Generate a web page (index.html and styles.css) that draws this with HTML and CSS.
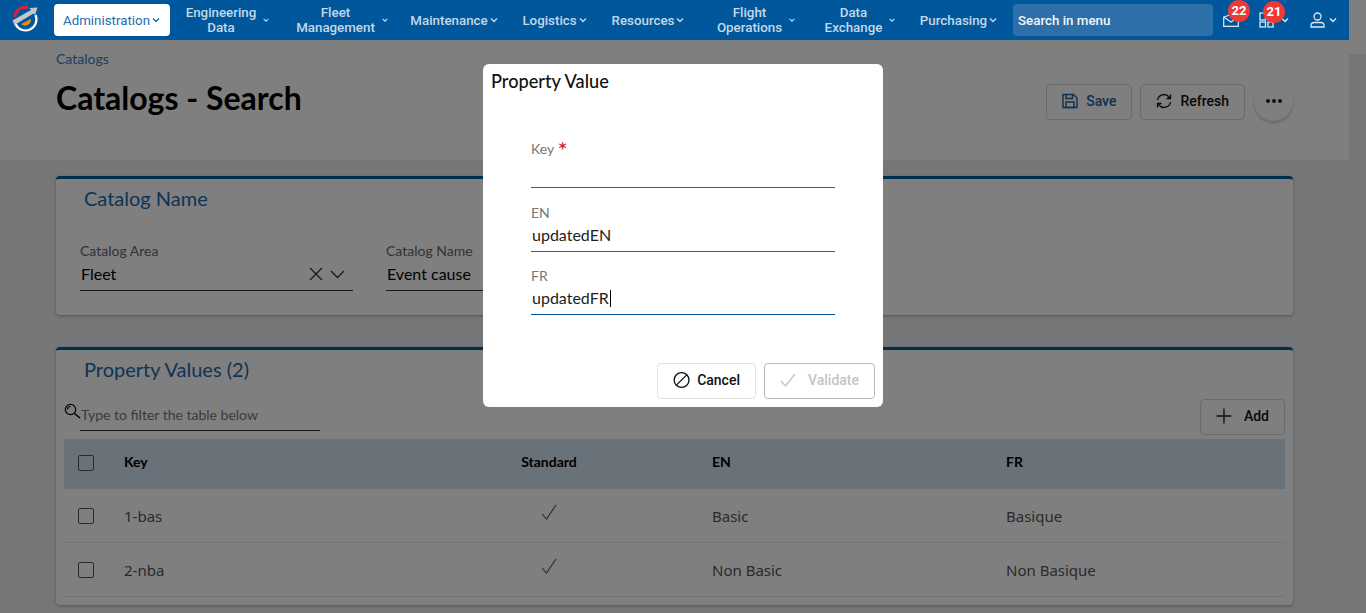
FILE: index.html
```html
<!DOCTYPE html>
<html lang="en">
<head>
  <meta charset="UTF-8">
  <title>Catalogs - Search</title>
  <link rel="stylesheet" href="styles.css">
</head>
<body>

  <div class="page">
    <!-- Top menu -->
    <nav class="topnav">
      <svg class="logo" width="28" height="28" viewBox="0 0 28 28">
        <path d="M3.6 11 A10.5 10.5 0 0 1 17 1.8" fill="none" stroke="#e0203a" stroke-width="3"/>
        <path d="M24.5 9 A10.5 10.5 0 0 1 4.5 18 " fill="none" stroke="#fff" stroke-width="2.2"/>
        <path d="M20 13 A6 6 0 0 1 10 18 Z" fill="#f08a10"/>
        <path d="M1.5 14.5 L20 4 L18.5 2 L26.5 1.5 L24 9 L22.5 7.5 L3.5 19 Z" fill="#c4c8cc"/>
      </svg>
      <a class="nav-active">Administration <svg class="chev" viewBox="0 0 10 10"><path d="M2 3.5 L5 6.5 L8 3.5"/></svg></a>
      <div class="nav-list">
        <a class="nav-item"><span>Engineering<br>Data</span><svg class="chev small" viewBox="0 0 10 10"><path d="M2 3.5 L5 6.5 L8 3.5"/></svg></a>
        <a class="nav-item"><span>Fleet<br>Management</span><svg class="chev small" viewBox="0 0 10 10"><path d="M2 3.5 L5 6.5 L8 3.5"/></svg></a>
        <a class="nav-item"><span>Maintenance</span><svg class="chev" viewBox="0 0 10 10"><path d="M2 3.5 L5 6.5 L8 3.5"/></svg></a>
        <a class="nav-item"><span>Logistics</span><svg class="chev" viewBox="0 0 10 10"><path d="M2 3.5 L5 6.5 L8 3.5"/></svg></a>
        <a class="nav-item"><span>Resources</span><svg class="chev" viewBox="0 0 10 10"><path d="M2 3.5 L5 6.5 L8 3.5"/></svg></a>
        <a class="nav-item"><span>Flight<br>Operations</span><svg class="chev small" viewBox="0 0 10 10"><path d="M2 3.5 L5 6.5 L8 3.5"/></svg></a>
        <a class="nav-item"><span>Data<br>Exchange</span><svg class="chev small" viewBox="0 0 10 10"><path d="M2 3.5 L5 6.5 L8 3.5"/></svg></a>
        <a class="nav-item"><span>Purchasing</span><svg class="chev" viewBox="0 0 10 10"><path d="M2 3.5 L5 6.5 L8 3.5"/></svg></a>
      </div>
      <div class="nav-search">Search in menu</div>
      <div class="nav-icons">
        <div class="nav-icon icon-mail">
          <svg width="16" height="14" viewBox="0 0 16 14" fill="none" stroke="#dbe7f2" stroke-width="1.2"><path d="M0.7 4 L11 0.7 L15.3 4 V13.3 H0.7 Z"/><path d="M0.7 4 L8 9 L15.3 4"/></svg>
          <span class="badge">22</span>
        </div>
        <div class="nav-icon icon-apps">
          <svg width="15" height="16" viewBox="0 0 15 16" fill="none" stroke="#dbe7f2" stroke-width="1.3"><rect x="1" y="1" width="5.5" height="7"/><rect x="1" y="10" width="5.5" height="5"/><rect x="9" y="10" width="5" height="5"/></svg>
          <span class="badge">21</span>
          <svg class="chev apps-chev" viewBox="0 0 10 10"><path d="M2 3.5 L5 6.5 L8 3.5"/></svg>
        </div>
        <div class="nav-icon icon-user">
          <svg width="15" height="16" viewBox="0 0 15 16" fill="none" stroke="#dbe7f2" stroke-width="1.3"><circle cx="7.5" cy="4.5" r="3.5"/><path d="M1 15 V13.5 Q1 10.5 4.5 10.5 H10.5 Q14 10.5 14 13.5 V15 Z"/></svg>
          <svg class="chev" viewBox="0 0 10 10"><path d="M2 3.5 L5 6.5 L8 3.5"/></svg>
        </div>
      </div>
    </nav>

    <!-- Page heading -->
    <header class="page-head">
      <div>
        <a class="crumb">Catalogs</a>
        <h1>Catalogs - Search</h1>
      </div>
      <div class="head-actions">
        <button class="btn btn-save">
          <svg width="16" height="16" viewBox="0 0 16 16" fill="none" stroke="#1d5f9a" stroke-width="1.4"><path d="M1 1.5 H11.5 L15 5 V14.5 H1 Z"/><path d="M4 1.5 V5.5 H10.5 V1.5"/><rect x="4" y="9" width="8" height="5.5"/></svg>
          Save
        </button>
        <button class="btn">
          <svg width="16" height="16" viewBox="0 0 16 16" fill="none" stroke="#111" stroke-width="1.3"><path d="M1.5 7 A6.5 6.5 0 0 1 13 4 L14.5 5.5"/><path d="M14.5 1.5 V5.5 H10.5"/><path d="M14.5 9 A6.5 6.5 0 0 1 3 12 L1.5 10.5"/><path d="M1.5 14.5 V10.5 H5.5"/></svg>
          Refresh
        </button>
        <button class="btn-round"><i></i><i></i><i></i></button>
      </div>
    </header>

    <main class="content">
      <section class="card card-name">
        <h2>Catalog Name</h2>
        <div class="filters">
          <div class="filter filter-area">
            <label>Catalog Area</label>
            <div class="filter-value">
              <span>Fleet</span>
              <svg width="36" height="14" viewBox="0 0 36 14" fill="none" stroke="#333" stroke-width="1.3"><path d="M1 1 L13 13 M13 1 L1 13"/><path d="M22 4 L28.5 10.5 L35 4"/></svg>
            </div>
          </div>
          <div class="filter filter-catalog">
            <label>Catalog Name</label>
            <div class="filter-value"><span>Event cause</span></div>
          </div>
        </div>
      </section>

      <section class="card card-values">
        <h2>Property Values (2)</h2>
        <div class="table-tools">
          <svg class="search-icon" width="17" height="16" viewBox="0 0 17 16" fill="none" stroke="#000" stroke-width="1.2"><circle cx="6.5" cy="6.5" r="5.2"/><path d="M10.5 10.5 L16 15" stroke-width="1.5"/><path d="M3.5 6.5 A3 3 0 0 1 6.5 3.5"/></svg>
          <div class="table-filter">Type to filter the table below</div>
          <button class="btn btn-add">
            <svg width="16" height="16" viewBox="0 0 16 16" fill="none" stroke="#222" stroke-width="1.4"><path d="M8 0.5 V15.5 M0.5 8 H15.5"/></svg>
            Add
          </button>
        </div>
        <table>
          <colgroup>
            <col class="col-check"><col class="col-key"><col class="col-std"><col class="col-en"><col class="col-fr">
          </colgroup>
          <thead>
            <tr><th><span class="check"></span></th><th>Key</th><th class="center">Standard</th><th>EN</th><th>FR</th></tr>
          </thead>
          <tbody>
            <tr>
              <td><span class="check"></span></td><td>1-bas</td>
              <td class="center"><svg class="tick" width="16" height="16" viewBox="0 0 16 16" fill="none" stroke="#555" stroke-width="1.1"><path d="M1 10 L5.5 15 L15 1"/></svg></td>
              <td>Basic</td><td>Basique</td>
            </tr>
            <tr>
              <td><span class="check"></span></td><td>2-nba</td>
              <td class="center"><svg class="tick" width="16" height="16" viewBox="0 0 16 16" fill="none" stroke="#555" stroke-width="1.1"><path d="M1 10 L5.5 15 L15 1"/></svg></td>
              <td>Non Basic</td><td>Non Basique</td>
            </tr>
          </tbody>
        </table>
      </section>
    </main>
  </div>

  <div class="scrollbar"><div class="scrollbar-top"></div></div>

  <!-- Dialog -->
  <div class="backdrop">
    <div class="dialog">
      <h3>Property Value</h3>
      <div class="dialog-fields">
        <div class="field field-key">
          <label>Key <em>*</em></label>
          <div class="field-input"></div>
        </div>
        <div class="field">
          <label>EN</label>
          <div class="field-input">updatedEN</div>
        </div>
        <div class="field">
          <label>FR</label>
          <div class="field-input focused">updatedFR<span class="caret"></span></div>
        </div>
      </div>
      <div class="dialog-actions">
        <button class="btn btn-cancel">
          <svg width="18" height="18" viewBox="0 0 18 18" fill="none" stroke="#111" stroke-width="1.4"><circle cx="9" cy="9" r="7.8"/><path d="M3.6 14.4 L14.4 3.6"/></svg>
          Cancel
        </button>
        <button class="btn btn-validate">
          <svg width="16" height="14" viewBox="0 0 16 14" fill="none" stroke="#c4c4c4" stroke-width="1.3"><path d="M1 8 L5.5 13 L15 1"/></svg>
          Validate
        </button>
      </div>
    </div>
  </div>

</body>
</html>
```

FILE: styles.css
```css
html, body {
  height: 100%;
  overflow: hidden;
}
body {
  margin: 0;
  display: flex;
  font-family: "Lato", sans-serif;
  background: #e8ecf0;
}
h1, h2, h3 {
  margin: 0;
  font-weight: 400;
}
.page {
  flex: 1;
  min-width: 0;
}
.scrollbar {
  width: 17px;
}
.scrollbar-top {
  height: 54px;
  background: #fff;
}

/* top menu */
.topnav {
  position: relative;
  z-index: 20;
  display: flex;
  align-items: center;
  height: 40px;
  background: #00579c;
  font: 500 13.33px/15px "Roboto", sans-serif;
  color: #c3d8ea;
}
.logo {
  margin: 0 15px 0 11px;
  flex: none;
}
.nav-active {
  display: flex;
  align-items: center;
  justify-content: center;
  gap: 1px;
  width: 116px;
  height: 32px;
  background: #fff;
  border-radius: 4px;
  color: #1f6cb0;
  font-weight: 400;
}
.nav-list {
  display: grid;
  grid-template-columns: 116px 113px 111px 90px 97px 119px 89px 108px;
}
.nav-item {
  display: flex;
  align-items: center;
  justify-content: center;
  gap: 1px;
  text-align: center;
}
.chev {
  width: 10px;
  height: 10px;
  fill: none;
  stroke: currentColor;
  stroke-width: 1.4;
  flex: none;
}
.chev.small {
  width: 8px;
  height: 8px;
  margin-left: 5px;
}
.nav-search {
  width: 195px;
  height: 32px;
  padding-left: 5px;
  line-height: 33px;
  background: #2d6fa9;
  border-radius: 4px;
  color: #f2f6fa;
}
.nav-icons {
  display: flex;
  align-items: center;
  padding-left: 10px;
}
.nav-icon {
  position: relative;
  display: flex;
  align-items: center;
  gap: 3px;
  color: #dbe7f2;
}
.icon-mail { width: 36px; }
.icon-apps { width: 51px; }
.badge {
  position: absolute;
  top: -13px;
  left: 5px;
  width: 22px;
  height: 22px;
  border-radius: 50%;
  background: #ee3a36;
  color: #fff;
  font: 700 13px/22px "Roboto", sans-serif;
  text-align: center;
}
.icon-apps .badge { left: 4px; top: -11px; }
.apps-chev {
  margin-left: 3px;
}

/* page heading */
.page-head {
  display: flex;
  justify-content: space-between;
  height: 120px;
  box-sizing: border-box;
  padding: 12px 56px 0;
  background: #fff;
}
.crumb {
  display: block;
  font-size: 14px;
  line-height: 14px;
  color: #3a78c0;
}
h1 {
  margin-top: 12px;
  font-size: 32px;
  line-height: 40px;
  font-weight: 700;
  color: #000;
}
.head-actions {
  display: flex;
  align-items: center;
  gap: 8px;
  height: 37px;
  margin-top: 31px;
}
.btn {
  display: inline-flex;
  align-items: center;
  justify-content: center;
  gap: 8px;
  height: 36px;
  padding: 0 15px 2px;
  box-sizing: border-box;
  border: 1px solid #d4d7da;
  border-radius: 4px;
  background: #fff;
  font: 500 14px "Roboto", sans-serif;
  color: #111;
}
.btn-save {
  color: #1d5f9a;
}
.btn-round {
  display: flex;
  align-items: center;
  justify-content: center;
  gap: 2px;
  width: 39px;
  height: 39px;
  margin-left: 1px;
  padding: 0 0 2px;
  border: none;
  border-radius: 50%;
  background: #fff;
  box-shadow: 0 2px 3px rgba(0, 0, 0, .2);
}
.btn-round i {
  width: 4px;
  height: 4px;
  border-radius: 50%;
  background: #222;
}

/* cards */
.content {
  padding: 16px 56px 0;
}
.card {
  position: relative;
  box-sizing: border-box;
  background: #fff;
  border-top: 3px solid #005c9e;
  border-radius: 4px;
  box-shadow: 0 1px 3px rgba(0, 0, 0, .3);
}
.card h2 {
  padding-left: 28px;
  font-size: 20px;
  line-height: 28px;
  color: #2168a8;
}
.card-name {
  height: 139px;
  padding-top: 5px;
  margin-bottom: 32px;
}
.filters {
  display: flex;
  gap: 33px;
  padding: 31px 0 0 24px;
}
.filter label {
  display: block;
  font-size: 14px;
  line-height: 16px;
  color: #666;
}
.filter-value {
  display: flex;
  justify-content: space-between;
  align-items: center;
  height: 32px;
  padding: 0 8px 2px 1px;
  box-sizing: border-box;
  border-bottom: 1px solid #333;
  font-size: 16px;
  color: #000;
}
.filter-area { width: 273px; }
.filter-catalog { width: 300px; }
.card-values {
  height: 258px;
  padding-top: 5px;
}
.table-tools {
  display: flex;
  align-items: flex-start;
  padding: 16px 8px 0 8px;
  height: 56px;
  box-sizing: border-box;
}
.search-icon {
  margin: 4px -1px 0 0;
  flex: none;
}
.table-filter {
  width: 240px;
  height: 32px;
  padding-left: 1px;
  line-height: 31px;
  box-sizing: border-box;
  border-bottom: 1px solid #333;
  font-size: 14px;
  color: #777;
}
.btn-add {
  margin-left: auto;
  width: 85px;
  gap: 12px;
}
table {
  width: 1221px;
  margin-left: 8px;
  border-collapse: collapse;
  table-layout: fixed;
}
.col-check { width: 60px; }
.col-key { width: 262px; }
.col-std { width: 326px; }
.col-en { width: 294px; }
.col-fr { width: 279px; }
th, td {
  padding: 0;
  text-align: left;
}
th {
  height: 50px;
  box-sizing: border-box;
  padding-bottom: 6px;
  background: #d2e3f2;
  font-size: 14px;
  font-weight: 700;
  color: #000;
}
th:first-child {
  padding-bottom: 2px;
}
td {
  height: 53px;
  border-bottom: 1px solid #e4e6e8;
  font: 15px "Noto Sans", sans-serif;
  color: #555;
}
.center { text-align: center; }
.check {
  display: block;
  width: 14px;
  height: 14px;
  margin-left: 14px;
  border: 1.5px solid #555;
  border-radius: 2px;
}
.tick {
  display: block;
  margin: 0 auto 7px;
}

/* dialog */
.backdrop {
  position: fixed;
  inset: 0;
  z-index: 10;
  display: flex;
  justify-content: center;
  align-items: flex-start;
  padding-top: 64px;
  background: rgba(0, 0, 0, .5);
}
.dialog {
  width: 400px;
  height: 343px;
  box-sizing: border-box;
  background: #fff;
  border-radius: 6px;
}
.dialog h3 {
  padding: 7px 0 0 8px;
  font-size: 18.2px;
  line-height: 20px;
  font-weight: 500;
  color: #111;
}
.dialog-fields {
  padding: 0 48px;
  margin-top: 50px;
}
.field {
  margin-bottom: 16px;
}
.field label {
  display: block;
  font-size: 14px;
  line-height: 16px;
  color: #777;
}
.field label em {
  font-style: normal;
  font-size: 24px;
  line-height: 0;
  vertical-align: -5px;
  color: #b5262a;
}
.field-input {
  height: 31px;
  line-height: 28px;
  padding-left: 1px;
  box-sizing: border-box;
  border-bottom: 1px solid #555;
  font-size: 16px;
  color: #222;
}
.field-key {
  margin-bottom: 17px;
}
.focused {
  border-bottom-color: #00579c;
}
.caret {
  display: inline-block;
  width: 1px;
  height: 17px;
  margin-left: 1px;
  vertical-align: -3px;
  background: #000;
}
.dialog-actions {
  display: flex;
  justify-content: flex-end;
  gap: 8px;
  margin-top: 48px;
  padding-right: 8px;
}
.btn-cancel {
  width: 99px;
  gap: 7px;
  border-color: #e2e2e2;
}
.btn-validate {
  width: 111px;
  gap: 12px;
  border-color: #bbb;
  color: #c4c4c4;
}
```
